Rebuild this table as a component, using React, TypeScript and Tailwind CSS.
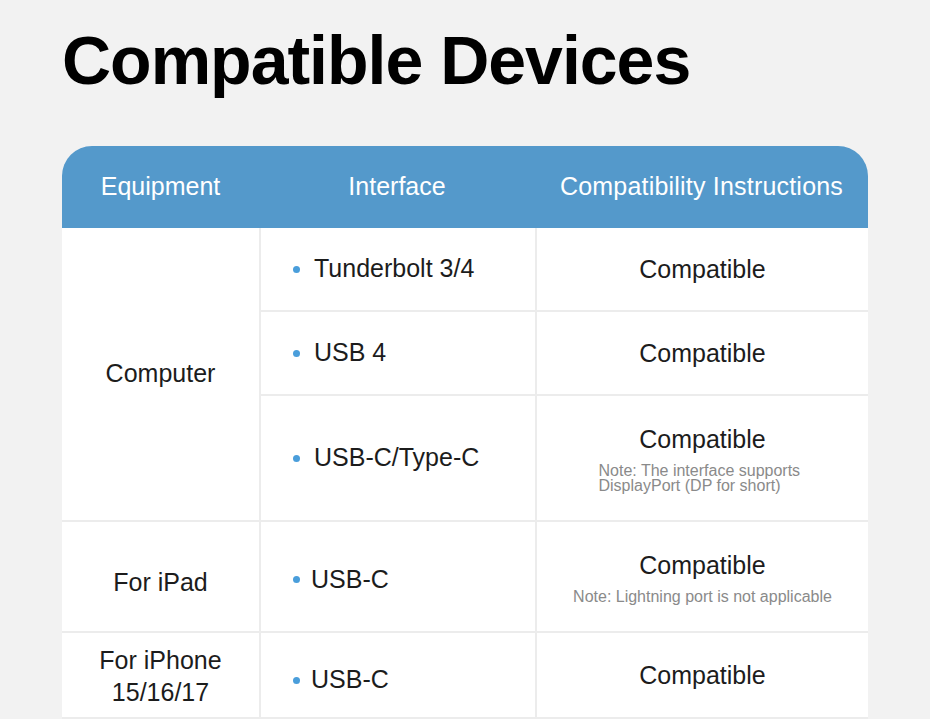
const font = { fontFamily: '"Liberation Sans", Arial, sans-serif' };

function Bullet({ label, tight, shift }: { label: string; tight?: boolean; shift?: string }) {
  return (
    <div className={`flex items-center h-full pl-[32px] ${shift ?? ""}`}>
      <span
        className={`w-[7px] h-[7px] rounded-full bg-[#4a9edb] shrink-0 ${
          tight ? "mr-[11px]" : "mr-[14px]"
        }`}
      />
      <span className="text-[25px] text-[#1c1c1c]">{label}</span>
    </div>
  );
}

function Status({ note, narrow }: { note?: string; narrow?: boolean }) {
  return (
    <div className="flex flex-col items-center justify-center h-full">
      <p className="text-[25px] leading-[30px] text-[#1c1c1c]">Compatible</p>
      {note && (
        <p
          className={`text-[16px] leading-[15px] text-[#8a8a8a] text-left mt-[9px] ${
            narrow ? "w-[208px]" : "w-fit"
          }`}
        >
          {note}
        </p>
      )}
    </div>
  );
}

export default function App() {
  return (
    <div className="min-h-screen bg-[#f2f2f2] pt-[26px]" style={font}>
      <h1 className="ml-[62px] text-[68px] leading-none font-bold tracking-[-1px] text-black">
        Compatible Devices
      </h1>

      <div className="ml-[62px] mt-[52px] w-[806px]">
        <div className="grid grid-cols-[197px_276px_333px] h-[82px] rounded-t-[30px] bg-[#5499cb] text-white text-[25px]">
          <div className="flex items-center justify-center">Equipment</div>
          <div className="flex items-center justify-center">Interface</div>
          <div className="flex items-center justify-center tracking-[0.2px]">
            Compatibility Instructions
          </div>
        </div>

        <div className="grid grid-cols-[197px_274px_331px] grid-rows-[82px_82px_124px_109px_84px] gap-[2px] bg-[#ececec] pb-[2px]">
          <div className="row-span-3 bg-white flex items-center justify-center text-[25px] text-[#1c1c1c]">
            Computer
          </div>
          <div className="bg-white">
            <Bullet label="Tunderbolt 3/4" />
          </div>
          <div className="bg-white">
            <Status />
          </div>
          <div className="bg-white">
            <Bullet label="USB 4" />
          </div>
          <div className="bg-white">
            <Status />
          </div>
          <div className="bg-white">
            <Bullet label="USB-C/Type-C" />
          </div>
          <div className="bg-white">
            <Status note="Note: The interface supports DisplayPort (DP for short)" narrow />
          </div>

          <div className="bg-white flex items-center justify-center pt-[12px] text-[25px] text-[#1c1c1c]">
            For iPad
          </div>
          <div className="bg-white">
            <Bullet label="USB-C" tight shift="pt-[6px]" />
          </div>
          <div className="bg-white">
            <Status note="Note: Lightning port is not applicable" />
          </div>

          <div className="bg-white flex items-center justify-center text-center pt-[2px] text-[25px] leading-[32px] text-[#1c1c1c]">
            For iPhone
            <br />
            15/16/17
          </div>
          <div className="bg-white">
            <Bullet label="USB-C" tight shift="pt-[10px]" />
          </div>
          <div className="bg-white">
            <Status />
          </div>
        </div>
      </div>
    </div>
  );
}
